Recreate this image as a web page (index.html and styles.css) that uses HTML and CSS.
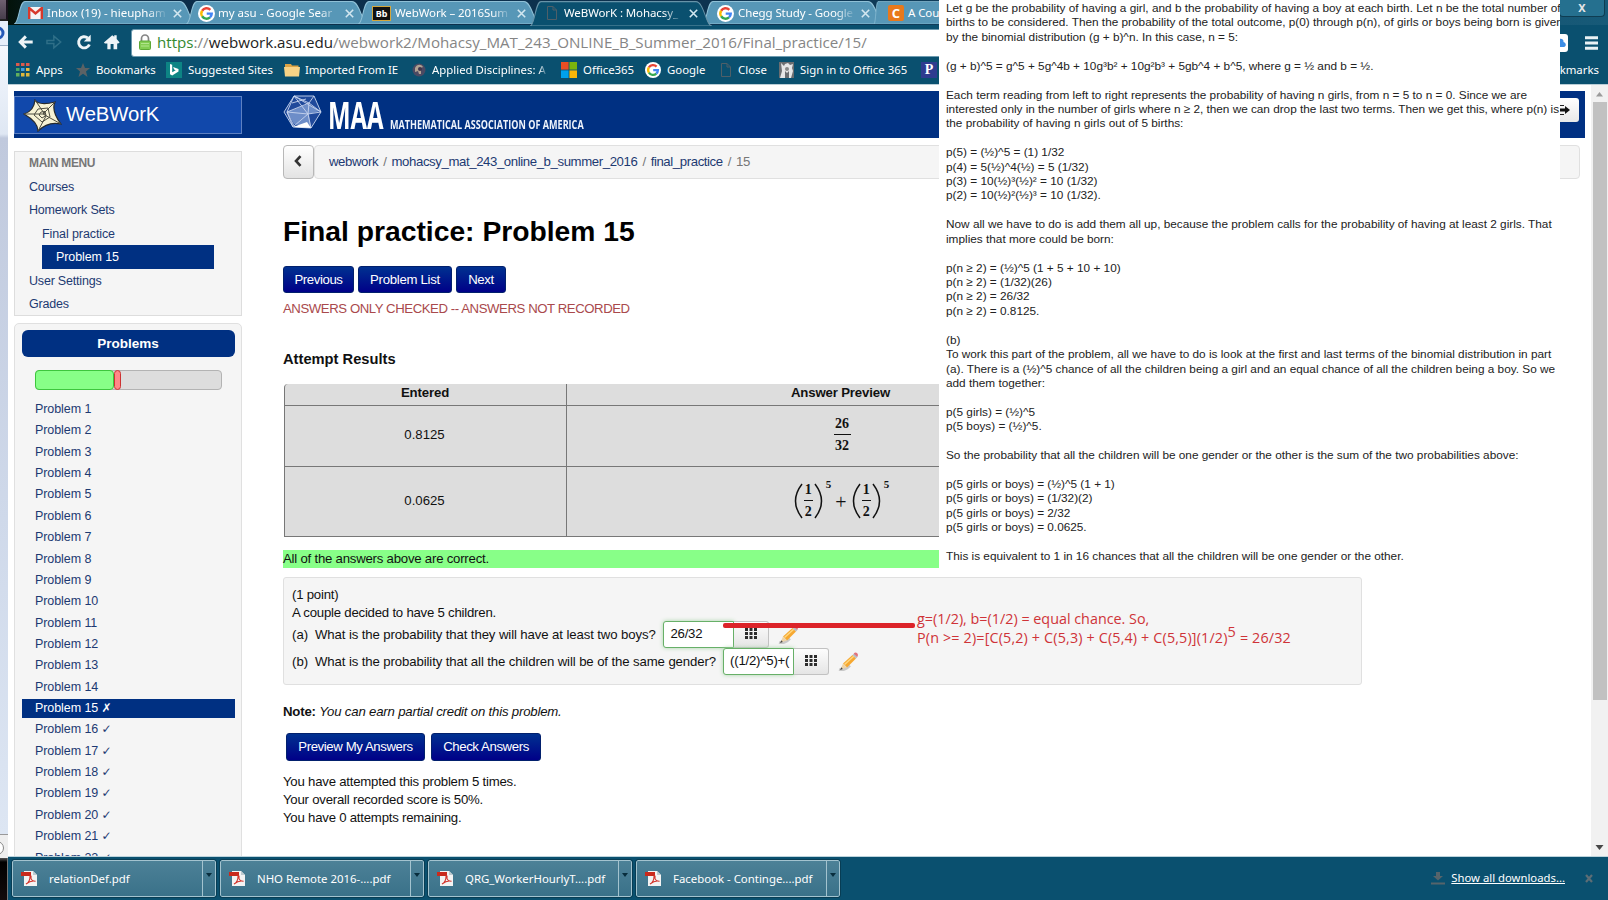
FILE: index.html
```html
<!DOCTYPE html>
<html lang="en">
<head>
<meta charset="utf-8">
<title>WeBWorK : Mohacsy_MAT_243_ONLINE_B_Summer_2016</title>
<link rel="stylesheet" href="styles.css">
</head>
<body>
<svg class="defs" width="0" height="0">
  <symbol id="google" viewBox="0 0 16 16"><circle cx="8" cy="8" r="8" fill="#fff"/><g fill="none" stroke-width="2.3"><path d="M3.9 5.4A4.9 4.9 0 0 1 11.6 4.6" stroke="#e94335"/><path d="M3.9 10.6a4.9 4.9 0 0 1 0-5.2" stroke="#fbbc05"/><path d="M3.9 10.6a4.9 4.9 0 0 0 7.4 1" stroke="#34a853"/><path d="M8.2 8.1h4.7a4.9 4.9 0 0 1-1.6 3.5" stroke="#4285f4"/></g></symbol>
  <symbol id="page" viewBox="0 0 12 14"><path d="M1.5.5h5.500l3.500 3.500v9.500h-9zM7 .5v3.500h3.500" fill="none" stroke="#4e5f68"/></symbol>
  <symbol id="pdf" viewBox="0 0 17 17"><path d="M3 1h9l4 4v11H3z" fill="#f3f3f3"/><path d="M12 1v4h4z" fill="#bfcbd0"/><path d="M0 2h10v4H0z" fill="#c92a1d"/><path d="M5 14c2-1 4-4 4-7.500 0-1.500 1.500-1 1 .8-.4 2 1.500 4 4.500 4-3-1-6 0-9.500 2.700z" fill="none" stroke="#d2322a" stroke-width="1.100"/></symbol>
  <symbol id="pencil" viewBox="0 0 22 20"><path d="M2 17.500c5 1.500 8-1 11-4" stroke="#c9c9c9" stroke-width="2.500" fill="none"/><path d="M6 11.500 15.500 3l3.500 3.500L10 15.500z" fill="#f6a831"/><path d="m7.500 12.500 9.500-8.500" stroke="#ffd77f" stroke-width="1.500"/><path d="M15.500 3l1.700-1.600 3.500 3.400L19 6.500z" fill="#b9bdc4"/><path d="M16.700 1.800c1-1.500 2.500-1.500 3.500-.5s1 2.500 0 3.500z" fill="#e2737c"/><path d="M6 11.500l4 4-6.500 2z" fill="#eed3a6"/><path d="M4.300 15.200 3 18l2.800-.9z" fill="#444"/></symbol>
  <symbol id="grid" viewBox="0 0 12 11"><path d="M0 0h3v3H0zM4.500 0h3v3h-3zM9 0h3v3H9zM0 4h3v3H0zM4.500 4h3v3h-3zM9 4h3v3H9zM0 8h3v3H0zM4.500 8h3v3h-3zM9 8h3v3H9z" fill="#2c2c2c"/></symbol>
</svg>

<div class="behind">
  <div class="behind-title"></div>
  <div class="behind-tool"><svg width="8" height="18"><circle cx="-2" cy="9" r="5" fill="none" stroke="#2559b8" stroke-width="3"/></svg></div>
  <div class="behind-body"></div>
  <div class="behind-foot"><svg width="8" height="20"><circle cx="-3" cy="11" r="6.500" fill="#fff" stroke="#888"/></svg></div>
  <div class="behind-dark"></div>
</div>

<div class="browser">
  <div class="tabs">
    <div class="tab t1"><svg class="tabshape" viewBox="0 0 181 24" preserveAspectRatio="none"><path d="M0 24C5 24 5 1.500 11 1.500H165C173 1.500 175 24 181 24z"/></svg>
      <svg class="fav" width="15" height="12" viewBox="0 0 15 12"><path d="M0 0h15v12H0z" fill="#f5f5f5"/><path d="M1.200 12V1l6.300 5.500L13.800 1v11" fill="none" stroke="#d8392b" stroke-width="2.400"/></svg><span class="label">Inbox (19) - hieupham</span><svg class="x" viewBox="0 0 9 9"><path d="M.8.8l7.400 7.400M8.200.8L.8 8.200"/></svg></div>
    <div class="tab t2"><svg class="tabshape" viewBox="0 0 181 24" preserveAspectRatio="none"><path d="M0 24C5 24 5 1.500 11 1.500H165C173 1.500 175 24 181 24z"/></svg>
      <svg class="fav" width="17" height="17"><use href="#google"/></svg><span class="label">my asu - Google Sear</span><svg class="x" viewBox="0 0 9 9"><path d="M.8.8l7.400 7.400M8.200.8L.8 8.200"/></svg></div>
    <div class="tab t3"><svg class="tabshape" viewBox="0 0 181 24" preserveAspectRatio="none"><path d="M0 24C5 24 5 1.500 11 1.500H165C173 1.500 175 24 181 24z"/></svg>
      <span class="fav bb">Bb</span><span class="label">WebWork – 2016Sum</span><svg class="x" viewBox="0 0 9 9"><path d="M.8.8l7.400 7.400M8.200.8L.8 8.200"/></svg></div>
    <div class="tab t4 active"><svg class="tabshape" viewBox="0 0 181 24" preserveAspectRatio="none"><path d="M0 24C5 24 5 1.500 11 1.500H165C173 1.500 175 24 181 24z"/></svg>
      <svg class="fav" width="12" height="14"><use href="#page"/></svg><span class="label">WeBWorK : Mohacsy_</span><svg class="x" viewBox="0 0 9 9"><path d="M.8.8l7.400 7.400M8.200.8L.8 8.200"/></svg></div>
    <div class="tab t5"><svg class="tabshape" viewBox="0 0 181 24" preserveAspectRatio="none"><path d="M0 24C5 24 5 1.500 11 1.500H165C173 1.500 175 24 181 24z"/></svg>
      <svg class="fav" width="17" height="17"><use href="#google"/></svg><span class="label">Chegg Study - Google</span><svg class="x" viewBox="0 0 9 9"><path d="M.8.8l7.400 7.400M8.200.8L.8 8.200"/></svg></div>
    <div class="tab t6"><svg class="tabshape" viewBox="0 0 181 24" preserveAspectRatio="none"><path d="M0 24C5 24 5 1.500 11 1.500H181V24z"/></svg>
      <span class="fav chegg">C</span><span class="label">A Cou</span></div>
    <div class="winclose">X</div>
  </div>

  <div class="toolbar">
    <svg class="nav" width="112" height="20" viewBox="0 0 112 20"><g fill="none" stroke="#eef4f7" stroke-width="3"><path d="M16 10H4M9 4.300 3.300 10 9 15.700"/><path d="M72 5.800A5.700 5.700 0 1 0 73.700 12.500"/></g><path d="M68 9.500h7v-7z" fill="#eef4f7"/><path d="M30.500 8.500h7V4l7 6-7 6v-4.500h-7z" fill="none" stroke="#2f6f88" stroke-width="1.500"/><path d="M88.500 10.500 97 3l2 1.700V3h2.500v4l3 3.500-1.500 1H102V17.500h-3.700V12h-3v5.500H92v-6h-2.500z" fill="#eef4f7"/></svg>
    <div class="url"><svg width="12" height="16" viewBox="0 0 12 16"><path d="M2.500 8V4.500a3.500 3.500 0 0 1 7 0V8" fill="none" stroke="#858585" stroke-width="1.700"/><rect x=".5" y="7" width="11" height="8.500" rx="1" fill="#83ce52" stroke="#5da836"/><path d="M2 9.500h8M2 12h8" stroke="#b2e58e"/></svg><span class="addr"><i class="ok">https</i>://<b>webwork.asu.edu</b>/webwork2/Mohacsy_MAT_243_ONLINE_B_Summer_2016/Final_practice/15/</span></div>
    <svg class="cloud" width="10" height="18" viewBox="0 0 10 18"><path d="M0 0h6a3 3 0 0 1 3 3v12a3 3 0 0 1-3 3H0z" fill="#fff"/><path d="M0 5c3-1 5 1 4.500 3C8 9 7 13 5 13H0z" fill="#3c8de5"/></svg>
    <svg class="menu" width="13" height="14"><path d="M0 1.800h13M0 7h13M0 12.200h13" stroke="#eaf2f5" stroke-width="3"/></svg>
  </div>

  <div class="bookmarks">
    <svg class="bi m1" width="14" height="14" viewBox="0 0 14 14"><path d="M0 0h3.500v3H0zM5 0h3.500v3H5zM10 0h3.500v3H10z" fill="#dc5a4d"/><path d="M0 5h3.500v3H0z" fill="#46a566"/><path d="M5 5h3.500v3H5z" fill="#429de0"/><path d="M10 5h3.500v3H10z" fill="#e6bd45"/><path d="M0 10h3.500v3.500H0z" fill="#62b05c"/><path d="M5 10h3.500v3.500H5zM10 10h3.500v3.500H10z" fill="#ddb83c"/></svg><span class="w1">Apps</span>
    <svg class="bi m2" width="14" height="14" viewBox="0 0 14 14"><path d="M7 0l2 5h5L10 8.500 11.500 14 7 10.700 2.500 14 4 8.500 0 5h5z" fill="#5b6265"/></svg><span class="w2">Bookmarks</span>
    <svg class="bi m3" width="16" height="16" viewBox="0 0 16 16"><path d="M0 0h16v16H0z" fill="#0d8484"/><path d="M4 2l2.200.8v7.400l3.500-2-1.600-.8-1-2.400 5.400 2v2.500L6.200 13.500 4 12.200z" fill="#fff"/></svg><span class="w3">Suggested Sites</span>
    <svg class="bi m4" width="16" height="14" viewBox="0 0 16 14"><path d="M1 2V1h6l1 1.500h6.500V13H1z" fill="#dca345"/><path d="M0 4h16l-1 9.500H1z" fill="#f8d386"/></svg><span class="w4">Imported From IE</span>
    <svg class="bi m5" width="14" height="14" viewBox="0 0 14 14"><circle cx="7" cy="7" r="6.500" fill="#4b4a63"/><path d="M3 5c2-4 6-4 8-1l-2 1v6H7L6 8 3 9z" fill="#b1a191"/><circle cx="8" cy="6" r="2" fill="#40364b"/></svg><span class="w5">Applied Disciplines: A</span>
    <svg class="bi m6" width="16" height="16" viewBox="0 0 16 16"><path d="M0 0h7.600v7.600H0z" fill="#eb4e22"/><path d="M8.400 0H16v7.600H8.400z" fill="#7bb40c"/><path d="M0 8.400h7.600V16H0z" fill="#00a1ec"/><path d="M8.400 8.400H16V16H8.400z" fill="#fbb608"/></svg><span class="w6">Office365</span>
    <svg class="bi m7" width="16" height="16"><use href="#google"/></svg><span class="w7">Google</span>
    <svg class="bi m8" width="12" height="14"><use href="#page"/></svg><span class="w8">Close</span>
    <svg class="bi m9" width="15" height="16" viewBox="0 0 15 16"><path d="M0 0h15v16H0z" fill="#6b6d70"/><path d="M2 1l3 3 1-2 3-1 2 2 3-1-1 4 1 3-2 7H10V9l-2 2-2-2v7H1l2-7z" fill="#e6e6e6"/><circle cx="8" cy="7" r="2" fill="#888"/></svg><span class="w9">Sign in to Office 365</span>
    <span class="bi m10 pandora">P</span>
    <span class="other">okmarks</span>
  </div>

  <div class="viewport">
    <div class="page">
      <div class="masthead">
        <div class="brand"><svg width="39" height="33" viewBox="0 0 39 33"><path d="M12 1Q16 7 32 3 28 12 38 25 25 22 15 32 15 23 1 15 11 12 12 1z" fill="#f7f2d4" stroke="#272a2c" stroke-width="1.200"/><path d="M12 1 23 17 15 32M32 3 20 15 1 15M38 25 20 15M15 10l10-1 2 9-8 5-8-7zM18 13l4-.5 1 4-4 2.500-3-3z" fill="none" stroke="#4d4c40" stroke-width="1"/></svg><span>WeBWorK</span></div>
        <svg class="maa" width="40" height="36" viewBox="0 0 40 36"><path d="M11 1 31 1 38 17 28 33 10 32 1 17z" fill="#20499b" stroke="#b7c7e5"/><path d="M4 17 25 9 37 16 26 19 28 33 11 29z" fill="#6d8dc8"/><path d="M11 1 4 17 11 31 25 19 38 17 26 8z M26 8 25 19 28 33M11 1 38 17M31 1 26 8 4 17 25 19M10 32 4 17M11 1l14 18M9 8l14-4" fill="none" stroke="#c8d5ee" stroke-width=".9"/><path d="M10 32 24 27l4 6z" fill="#fff"/></svg>
        <b class="maa-name">MAA</b><b class="maa-long">MATHEMATICAL ASSOCIATION OF AMERICA</b>
        <span class="logout"><svg width="12" height="12" viewBox="0 0 12 12"><path d="M5 1.500H0M5 10.500H0" stroke="#222" stroke-width="1.200"/><path d="M1 4.500h5V2l5 4-5 4V7.500H1z" fill="#111"/></svg></span>
      </div>

      <div class="columns">
        <div class="side">
          <div class="mainmenu">
            <div class="mm-title">MAIN MENU</div>
            <a>Courses</a><a>Homework Sets</a><a class="in">Final practice</a><a class="in on">Problem 15</a><a>User Settings</a><a>Grades</a>
          </div>
          <div class="problems">
            <div class="p-title">Problems</div>
            <div class="progress"><span class="good"></span><span class="bad"></span></div>
            <div class="plist">
              <a>Problem 1</a><a>Problem 2</a><a>Problem 3</a><a>Problem 4</a><a>Problem 5</a><a>Problem 6</a><a>Problem 7</a><a>Problem 8</a><a>Problem 9</a><a>Problem 10</a><a>Problem 11</a><a>Problem 12</a><a>Problem 13</a><a>Problem 14</a><a class="on">Problem 15 <i>✗</i></a><a>Problem 16 <i>✓</i></a><a>Problem 17 <i>✓</i></a><a>Problem 18 <i>✓</i></a><a>Problem 19 <i>✓</i></a><a>Problem 20 <i>✓</i></a><a>Problem 21 <i>✓</i></a><a>Problem 22 <i>✓</i></a>
            </div>
          </div>
        </div>

        <div class="main">
          <div class="crumbs"><span class="back"><svg width="8" height="12" viewBox="0 0 8 12"><path d="M6.500 1.200 2 6l4.500 4.800" fill="none" stroke="#333" stroke-width="2.600"/></svg></span><div class="trail"><a>webwork</a><s>/</s><a>mohacsy_mat_243_online_b_summer_2016</a><s>/</s><a>final_practice</a><s>/</s><em>15</em></div></div>
          <h1>Final practice: Problem 15</h1>
          <div class="navrow"><span class="btn b-prev">Previous</span><span class="btn b-list">Problem List</span><span class="btn b-next">Next</span></div>
          <div class="warn">ANSWERS ONLY CHECKED -- ANSWERS NOT RECORDED</div>
          <h3>Attempt Results</h3>
          <div class="results">
            <div class="th">Entered</div><div class="th">Answer Preview</div>
            <div class="td">0.8125</div>
            <div class="td math"><span class="frac wide"><span>26</span><span>32</span></span></div>
            <div class="td last">0.0625</div>
            <div class="td last math">
              <svg class="paren" viewBox="0 0 9 36"><path d="M8 1Q-5 18 8 35"/></svg><span class="frac"><span>1</span><span>2</span></span><svg class="paren" viewBox="0 0 9 36"><path d="M1 1Q14 18 1 35"/></svg><span class="exp">5</span><span class="plus">+</span><svg class="paren" viewBox="0 0 9 36"><path d="M8 1Q-5 18 8 35"/></svg><span class="frac"><span>1</span><span>2</span></span><svg class="paren" viewBox="0 0 9 36"><path d="M1 1Q14 18 1 35"/></svg><span class="exp">5</span>
            </div>
          </div>
          <div class="correct">All of the answers above are correct.</div>
          <div class="question">
            <div class="q">(1 point)</div>
            <div class="q">A couple decided to have 5 children.</div>
            <div class="ask"><span class="let">(a)</span><span class="qa">What is the probability that they will have at least two boys?</span><span class="field">26/32</span><span class="pad"><svg width="12" height="11"><use href="#grid"/></svg></span><svg class="pen" width="22" height="20"><use href="#pencil"/></svg></div>
            <div class="ask"><span class="let">(b)</span><span class="qb">What is the probability that all the children will be of the same gender?</span><span class="field">((1/2)^5)+(</span><span class="pad"><svg width="12" height="11"><use href="#grid"/></svg></span><svg class="pen" width="22" height="20"><use href="#pencil"/></svg></div>
          </div>
          <div class="note"><b>Note:</b> <em>You can earn partial credit on this problem.</em></div>
          <div class="submitrow"><span class="btn b-pre">Preview My Answers</span><span class="btn b-chk">Check Answers</span></div>
          <div class="status">You have attempted this problem 5 times.<br>Your overall recorded score is 50%.<br>You have 0 attempts remaining.</div>
        </div>
      </div>
    </div>
    <div class="scroll"><svg width="17" height="17"><path d="M5 11.500h7L8.500 7z" fill="#9b9b9b"/></svg><span class="thumb"></span><svg class="down" width="17" height="17"><path d="M4.500 6h8l-4 5z" fill="#474747"/></svg></div>
  </div>

  <div class="downloads">
    <div class="dl"><svg width="17" height="17"><use href="#pdf"/></svg><span>relationDef.pdf</span><i></i></div>
    <div class="dl"><svg width="17" height="17"><use href="#pdf"/></svg><span>NHO Remote 2016-....pdf</span><i></i></div>
    <div class="dl"><svg width="17" height="17"><use href="#pdf"/></svg><span>QRG_WorkerHourlyT....pdf</span><i></i></div>
    <div class="dl"><svg width="17" height="17"><use href="#pdf"/></svg><span>Facebook - Continge....pdf</span><i></i></div>
    <svg class="dlicon" width="14" height="13" viewBox="0 0 14 13"><path d="M5 0h4v4h3L7 8.500 2 4h3zM0 10.500h14v2H0z" fill="#56646b"/></svg>
    <span class="all">Show all downloads...</span>
    <svg class="dlx" width="8" height="9" viewBox="0 0 8 9"><path d="M1 1l6 7M7 1L1 8" stroke="#5d6d75" stroke-width="2.200"/></svg>
  </div>
</div>

<div class="solution">Let g be the probability of having a girl, and b the probability of having a boy at each birth. Let n be the total number of
births to be considered. Then the probability of the total outcome, p(0) through p(n), of girls or boys being born is given
by the binomial distribution (g + b)^n. In this case, n = 5:

(g + b)^5 = g^5 + 5g^4b + 10g³b² + 10g²b³ + 5gb^4 + b^5, where g = ½ and b = ½.

Each term reading from left to right represents the probability of having n girls, from n = 5 to n = 0. Since we are
<span class="snug">interested only in the number of girls where n ≥ 2, then we can drop the last two terms. Then we get this, where p(n) is</span>
the probability of having n girls out of 5 births:

p(5) = (½)^5 = (1) 1/32
p(4) = 5(½)^4(½) = 5 (1/32)
p(3) = 10(½)³(½)² = 10 (1/32)
p(2) = 10(½)²(½)³ = 10 (1/32).

Now all we have to do is add them all up, because the problem calls for the probability of having at least 2 girls. That
implies that more could be born:

p(n ≥ 2) = (½)^5 (1 + 5 + 10 + 10)
p(n ≥ 2) = (1/32)(26)
p(n ≥ 2) = 26/32
p(n ≥ 2) = 0.8125.

(b)
To work this part of the problem, all we have to do is look at the first and last terms of the binomial distribution in part
(a). There is a (½)^5 chance of all the children being a girl and an equal chance of all the children being a boy. So we
add them together:

p(5 girls) = (½)^5
p(5 boys) = (½)^5.

So the probability that all the children will be one gender or the other is the sum of the two probabilities above:

p(5 girls or boys) = (½)^5 (1 + 1)
p(5 girls or boys) = (1/32)(2)
p(5 girls or boys) = 2/32
p(5 girls or boys) = 0.0625.

This is equivalent to 1 in 16 chances that all the children will be one gender or the other.</div>
<div class="redline"></div>
<div class="rednote"><div class="r1">g=(1/2), b=(1/2) = equal chance. So,</div><div class="r2">P(n &gt;= 2)=[C(5,2) + C(5,3) + C(5,4) + C(5,5)](1/2)<sup>5</sup> = 26/32</div></div>
</body>
</html>
```
FILE: styles.css
```css
* { box-sizing: border-box; }
body { margin: 0; width: 1608px; height: 900px; overflow: hidden; display: flex; position: relative; background: #fff; font: 13.2px/18px "Liberation Sans", sans-serif; letter-spacing: -0.22px; color: #111; }
svg { display: block; flex: none; }
i, em { font-style: normal; }
.defs { position: absolute; }

.behind { width: 8px; flex: none; display: flex; flex-direction: column; }
.behind-title { height: 21px; background: linear-gradient(#6e6070, #463d4b); border-right: 2px solid #151019; border-bottom: 2px solid #222; }
.behind-tool { height: 25px; background: #e6effb; display: flex; align-items: center; border-bottom: 1px solid #9fb2ca; }
.behind-body { height: 788px; background: linear-gradient(#f4f8fe 0, #dfe7f3 88px, #c0c9dd 92px, #cfd9ea 60%, #dde6f3); }
.behind-foot { height: 24px; background: #eee; border-top: 1px solid #999; display: flex; align-items: center; }
.behind-dark { flex: 1; background: linear-gradient(#555, #000 4px, #130b0b); border-right: 1px solid #777; }

.browser { flex: 1; display: flex; flex-direction: column; min-width: 0; }
.tabs { height: 25px; flex: none; display: flex; padding-left: 6px; background: linear-gradient(90deg, #03130a 0, #0b2c48 100px, #0d3350 700px, #175a78); font: 11.5px/24px "Noto Sans", sans-serif; letter-spacing: 0; }
.tab { position: relative; display: flex; align-items: center; height: 24px; width: 182px; margin-right: -10px; padding-left: 14px; color: #fff; flex: none; padding-top: 2px; }
.tabshape { position: absolute; inset: 0; width: 100%; height: 100%; fill: #5797b7; stroke: #8fc0d6; stroke-width: 1; }
.active { z-index: 2; }
.active .tabshape { fill: #0a506f; stroke: #6793a8; height: 26px; }
.fav { position: relative; flex: none; margin-right: 4px; }
.label { position: relative; flex: 1; white-space: nowrap; -webkit-mask-image: linear-gradient(90deg, #000 83%, transparent); mask-image: linear-gradient(90deg, #000 83%, transparent); }
.x { position: relative; width: 9px; height: 9px; margin: 0 14px 0 5px; fill: none; stroke: #d3e7f0; stroke-width: 1.6; }
.t2 { padding-left: 12px; }
.t2 .fav { margin-right: 3px; }
.bb { width: 17px; height: 13px; background: #111; outline: 1px solid #d4a63a; font: bold 9px/13px "Noto Sans", sans-serif; text-align: center; margin-right: 5px; }
.t3 { padding-left: 15px; letter-spacing: -.1px; }
.t4 { padding-left: 16px; letter-spacing: -.1px; }
.t4 .fav { margin-right: 6px; }
.t5 { padding-left: 15px; letter-spacing: -.1px; }
.t6 { width: 66px; padding-left: 14px; }
.t6 .label { mask-image: none; -webkit-mask-image: none; letter-spacing: -.1px; }
.chegg { width: 16px; height: 16px; background: #e8791c; border-radius: 2px; font: bold 13px/16px "Open Sans", sans-serif; text-align: center; }
.winclose { margin-left: auto; width: 46px; height: 17px; margin-right: 3px; border: 1px solid #0f3d52; border-top: 0; border-radius: 0 0 4px 4px; background: #25708f; color: #e6e6e6; font: bold 11px/15px "Noto Sans", sans-serif; text-align: center; }

.toolbar { height: 32px; flex: none; display: flex; align-items: center; background: #0a506f; padding: 4px 10px 0 7px; }
.nav { margin-right: 4px; margin-top: -2px; padding: 0 0 0 2px; }
.url { flex: 1; height: 28px; margin-right: 20px; background: #fff; border: 1px solid #6d9bb0; border-radius: 3px; display: flex; align-items: center; padding: 0 0 2px 7px; }
.addr { margin-left: 6px; font: 15.15px/24px "Open Sans", sans-serif; letter-spacing: 0; color: #858585; white-space: nowrap; }
.addr b { font-weight: 400; color: #222; }
.addr .ok { color: #34892f; }
.cloud { margin: 0 16px 0 -17px; }
.bookmarks { height: 28px; flex: none; display: flex; align-items: center; background: #0a506f; border-bottom: 1px solid #b9cdd6; color: #fff; font: 11.4px/26px "Noto Sans", sans-serif; letter-spacing: 0; white-space: nowrap; padding: 0 0 2px 8px; }
.bookmarks span { flex: none; }
.bi { margin-right: 6px; }
.w1 { width: 40px; } .w2 { width: 70px; letter-spacing: -.1px; } .w3 { width: 96px; } .w4 { width: 107px; letter-spacing: -.1px; }
.w5 { width: 116px; margin-right: 13px; -webkit-mask-image: linear-gradient(90deg,#000 92%, transparent); mask-image: linear-gradient(90deg,#000 92%, transparent); }
.w6 { width: 62px; } .w7 { width: 53px; } .w8 { width: 41px; } .w9 { width: 121px; }
.m4 { margin-right: 5px; } .m8 { margin-right: 6px; }
.pandora { width: 16px; height: 16px; background: #2f3c8f; font: bold 14px/16px "Liberation Serif", serif; text-align: center; }
.other { margin-left: auto; margin-right: 9px; }

.viewport { flex: 1; min-height: 0; display: flex; overflow: hidden; }
.page { flex: 1; padding: 6px 6px 0 6px; min-width: 0; }
.masthead { height: 47px; background: #003082; display: flex; align-items: center; padding-right: 6px; }
.brand { width: 228px; height: 38px; margin-top: 1px; background: #1148ab; border: 1px solid #5d80c2; display: flex; align-items: center; padding-left: 8px; color: #fff; font-size: 20.3px; letter-spacing: -.1px; }
.brand span { margin-left: 4px; margin-top: -3px; }
.maa { margin-left: 41px; margin-top: -3px; }
.maa-name { font: bold 38px/40px "Open Sans", sans-serif; color: #fff; width: 56px; margin-left: 5px; letter-spacing: 0; transform: scaleX(.63); transform-origin: 0 50%; margin-top: -1px; }
.maa-long { font: bold 12px/14px "Open Sans", sans-serif; color: #eef3fb; letter-spacing: 0; transform: scaleX(.755); transform-origin: 0 50%; margin: 20px 0 0 6px; white-space: nowrap; }
.logout { margin-left: auto; width: 34px; height: 24px; margin-bottom: 9px; background: linear-gradient(#fff, #e8e8e8); border-radius: 3px; display: flex; align-items: center; padding-left: 14px; }
.columns { display: flex; }
.side { width: 228px; padding-top: 13px; flex: none; font-size: 12.5px; letter-spacing: -.08px; }
.mainmenu { height: 165px; border: 1px solid #ddd; background: #f5f5f5; padding: 1px 27px 0 0; }
.mm-title { font-weight: bold; color: #777; font-size: 12px; letter-spacing: -.35px; padding-left: 14px; line-height: 20px; height: 22px; }
.mainmenu a { display: block; padding-left: 14px; height: 23.4px; line-height: 24px; color: #1d3a72; letter-spacing: -.2px; }
.mainmenu .in { padding-left: 27px; letter-spacing: -.1px; }
.mainmenu .on { margin-left: 27px; padding-left: 14px; background: #003082; color: #fff; }
.problems { margin-top: 7px; height: 700px; border: 1px solid #e0e0e0; border-radius: 5px; background: #f5f5f5; padding: 6px 6px 0 7px; }
.p-title { height: 27px; border-radius: 6px; background: #003082; color: #fff; font: bold 13.5px/27px "Liberation Sans", sans-serif; letter-spacing: 0; text-align: center; padding-right: 1px; }
.progress { margin: 13px 13px 10px 13px; height: 20px; border: 1px solid #b3b3b3; border-radius: 4px; background: #ddd; display: flex; }
.good, .bad { margin: -1px 0; border-radius: 4px; border: 1px solid #3ec63e; background: #88ff88; }
.good { margin-left: -1px; width: 79px; }
.bad { width: 7px; background: #f88; border-color: #c33; }
.plist a { display: block; height: 21.37px; line-height: 18.5px; padding-left: 13px; color: #1d3a72; position: relative; }
.plist i { font: 12px/10px "DejaVu Sans", sans-serif; }
.plist .on { color: #fff; background: linear-gradient(#003082, #003082) 0 0 / 100% 19px no-repeat; }

.main { padding: 7px 0 0 41px; flex: 1; min-width: 0; }
.crumbs { display: flex; height: 34px; width: 1297px; }
.back { width: 31px; background: linear-gradient(#fff, #e3e3e3); border: 1px solid #b8b8b8; border-radius: 4px; display: flex; align-items: center; justify-content: center; padding: 0 1px 2px 0; }
.trail { flex: 1; border: 1px solid #e0e0e0; border-radius: 4px; background: #f5f5f5; line-height: 31px; padding-left: 14px; display: flex; color: #1d3a72; letter-spacing: -.4px; }
.trail s { text-decoration: none; color: #777; margin: 0 5px; }
.trail em { color: #777; }
h1 { font-size: 28.25px; line-height: 32px; letter-spacing: 0; margin: 36px 0 0; color: #000; }
.navrow { display: flex; gap: 4px; margin-top: 19px; }
.btn { height: 27px; line-height: 25px; text-align: center; color: #fff; border-radius: 3px; border: 1px solid #02206d; background: linear-gradient(#003190, #000088); letter-spacing: -.4px; }
.b-prev { width: 71px; } .b-list { width: 94px; letter-spacing: -.28px; } .b-next { width: 50px; }
.warn { color: #a9494c; letter-spacing: -.43px; margin-top: 7px; }
h3 { font-size: 14.7px; line-height: 20px; letter-spacing: 0; margin: 31px 0 15px; color: #111; height: 20px; }
.results { display: grid; grid-template-columns: 282px 549px; grid-template-rows: 22px 61px 70px; margin-left: 1px; border-left: 1px solid #777; width: 832px; background: #ddd; border-radius: 4px 0 0 0; }
.results > div { border-right: 1px solid #777; border-bottom: 1px solid #777; display: flex; align-items: center; justify-content: center; }
.results .th { font-weight: bold; padding: 0 1px 3px 0; letter-spacing: -.14px; }
.results .td { padding: 0 2px 3px 0; letter-spacing: 0; }
.results .math { font: bold 14px/16px "Liberation Serif", serif; padding: 0 0 2px 0; }
.results .last { padding-bottom: 2px; }
.frac { display: flex; flex-direction: column; width: 9px; text-align: center; }
.frac span { height: 19px; line-height: 18px; }
.frac span + span { border-top: 1px solid #111; line-height: 21px; height: 21px; }
.frac.wide { width: 17px; margin-left: 2px; }
.paren { width: 9px; height: 36px; fill: none; stroke: #111; stroke-width: 1.5; margin: 0 1px; }
.exp { font-size: 11px; margin: -33px 0 0 2px; }
.plus { font: 20px/20px "Liberation Serif", serif; margin: 2px 4px 0; }
.correct { margin-top: 13px; width: 700px; height: 18px; background: #88ff88; line-height: 17px; }
.question { margin-top: 9px; width: 1079px; height: 108px; border: 1px solid #e0e0e0; border-radius: 3px; background: #f5f5f5; padding: 8px 0 0 8px; }
.ask { display: flex; align-items: center; height: 27px; letter-spacing: 0; }
.q + .ask { margin-top: -1px; }
.let { width: 23px; }
.qa { width: 348.4px; white-space: nowrap; letter-spacing: -.11px; }
.qb { width: 408px; white-space: nowrap; letter-spacing: -.11px; }
.field { width: 71px; height: 27px; border: 1px solid #67b068; border-radius: 3px 0 0 3px; background: #fff; box-shadow: 0 0 4px #a7d4a7; line-height: 24px; padding-left: 6px; white-space: nowrap; letter-spacing: -.2px; }
.pad { width: 35px; height: 27px; border: 1px solid #c2c2c2; border-left: 0; border-radius: 0 3px 3px 0; background: linear-gradient(#fdfdfd, #e5e5e5); display: flex; align-items: center; padding: 0 0 3px 11px; }
.pen { margin-left: 8px; }
.note { margin-top: 17px; height: 20px; line-height: 20px; letter-spacing: -.19px; }
.note em { font-style: italic; }
.submitrow { display: flex; gap: 6px; margin: 11px 0 12px 3px; }
.submitrow .btn { height: 28px; line-height: 26px; }
.b-pre { width: 139px; } .b-chk { width: 110px; }

.scroll { width: 17px; background: #f1f1f1; display: flex; flex-direction: column; align-items: center; }
.thumb { width: 14px; height: 598px; background: #c1c1c1; }
.down { margin-top: auto; }

.downloads { height: 44px; flex: none; background: #0a506f; border-top: 1px solid #bcd3dc; display: flex; align-items: center; padding: 0 15px 1px 4px; gap: 4px; color: #fff; font: 11.4px/20px "Noto Sans", sans-serif; letter-spacing: 0; }
.dl { width: 204px; height: 37px; border: 1px solid #a3c3cf; outline: 1px solid #083d54; border-radius: 2px; background: linear-gradient(#4c8197, #3a7189); display: flex; align-items: center; padding-left: 8px; white-space: nowrap; }
.dl span { flex: 1; margin-left: 11px; padding-top: 1px; }
.dl i { width: 13px; align-self: stretch; border-left: 1px solid #a3c3cf; display: flex; justify-content: center; padding-top: 12px; }
.dl i::before { content: ""; border: 3px solid transparent; border-top: 4px solid #082d3d; height: 0; }
.dlicon { margin-left: auto; }
.all { text-decoration: underline; font-size: 11.3px; margin: 0 16px 0 2px; }

.solution { position: absolute; left: 939px; top: 0; width: 621px; height: 570px; padding: 1px 0 0 7px; background: #fff; overflow: hidden; white-space: pre; font: 11.8px/14.42px "Liberation Sans", sans-serif; letter-spacing: 0; color: #222; }
.snug { letter-spacing: -.02px; }
.redline { position: absolute; left: 723px; top: 623px; width: 192px; height: 5px; border-radius: 2px; background: #dc2329; }
.rednote { position: absolute; left: 917px; top: 609px; font: 14.35px/19px "Open Sans", sans-serif; letter-spacing: 0; color: #cf3338; white-space: nowrap; }
.r2 { letter-spacing: .15px; }
.rednote sup { font-size: 14.5px; line-height: 0; vertical-align: 6px; }
```
